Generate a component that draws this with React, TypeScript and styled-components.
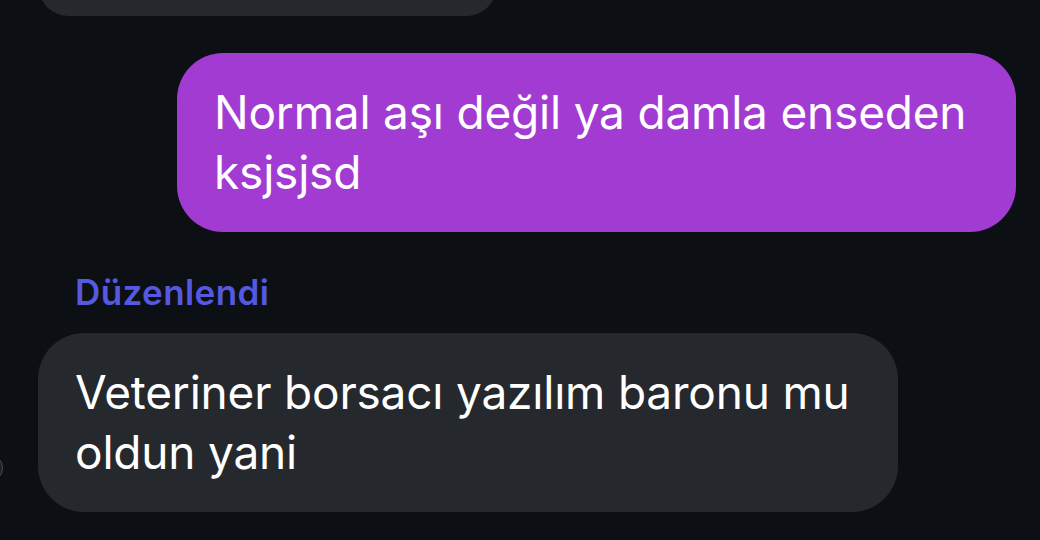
import styled, { createGlobalStyle } from "styled-components";

const GlobalStyle = createGlobalStyle`
  html, body {
    margin: 0;
    padding: 0;
    background: #0c0f13;
    overflow: hidden;
  }
  body {
    font-family: Inter, "Noto Sans", "Liberation Sans", sans-serif;
    -webkit-font-smoothing: antialiased;
  }
`;

const Screen = styled.div`
  width: 1040px;
  height: 540px;
  overflow: hidden;
  background: #0c0f13;
`;

// thread is scrolled: the previous bubble only shows its bottom edge
const Thread = styled.div`
  display: flex;
  flex-direction: column;
  padding-right: 24px;
  margin-top: -46px;
`;

const IncomingRow = styled.div`
  display: flex;
  align-items: flex-end;
`;

const Avatar = styled.div<{ $hidden?: boolean }>`
  flex: none;
  box-sizing: border-box;
  width: 30px;
  height: 30px;
  margin-left: -27px;
  margin-right: 35px;
  margin-bottom: 29px;
  border-radius: 50%;
  background: #1c1e23;
  border: 1px solid #4a4c52;
  visibility: ${(p) => (p.$hidden ? "hidden" : "visible")};
`;

const Bubble = styled.div<{ $out?: boolean; $max: number; $gap?: number }>`
  box-sizing: border-box;
  width: fit-content;
  max-width: ${(p) => p.$max}px;
  padding: 29px 36px 30px 37px;
  border-radius: 46px;
  background: ${(p) => (p.$out ? "#a23bd2" : "#25282d")};
  color: #ffffff;
  font-size: 46px;
  line-height: 60px;
  letter-spacing: -0.2px;
  align-self: ${(p) => (p.$out ? "flex-end" : "flex-start")};
  margin-top: ${(p) => p.$gap ?? 0}px;
`;

const ScrolledBubble = styled.div`
  width: 459px;
  height: 62px;
  border-radius: 46px;
  background: #25282d;
`;

const EditedLabel = styled.div`
  margin: 40px 0 21px 75px;
  color: #5559e0;
  font-size: 35px;
  font-weight: 600;
  line-height: 40px;
  letter-spacing: 0.4px;
`;

const App = () => {
  return (
    <Screen>
      <GlobalStyle />
      <Thread>
        <IncomingRow>
          <Avatar $hidden />
          <ScrolledBubble />
        </IncomingRow>

        <Bubble $out $max={839} $gap={37}>
          Normal aşı değil ya damla enseden ksjsjsd
        </Bubble>

        <EditedLabel>Düzenlendi</EditedLabel>

        <IncomingRow>
          <Avatar />
          <Bubble $max={860}>Veteriner borsacı yazılım baronu mu oldun yani</Bubble>
        </IncomingRow>
      </Thread>
    </Screen>
  );
};

export default App;
